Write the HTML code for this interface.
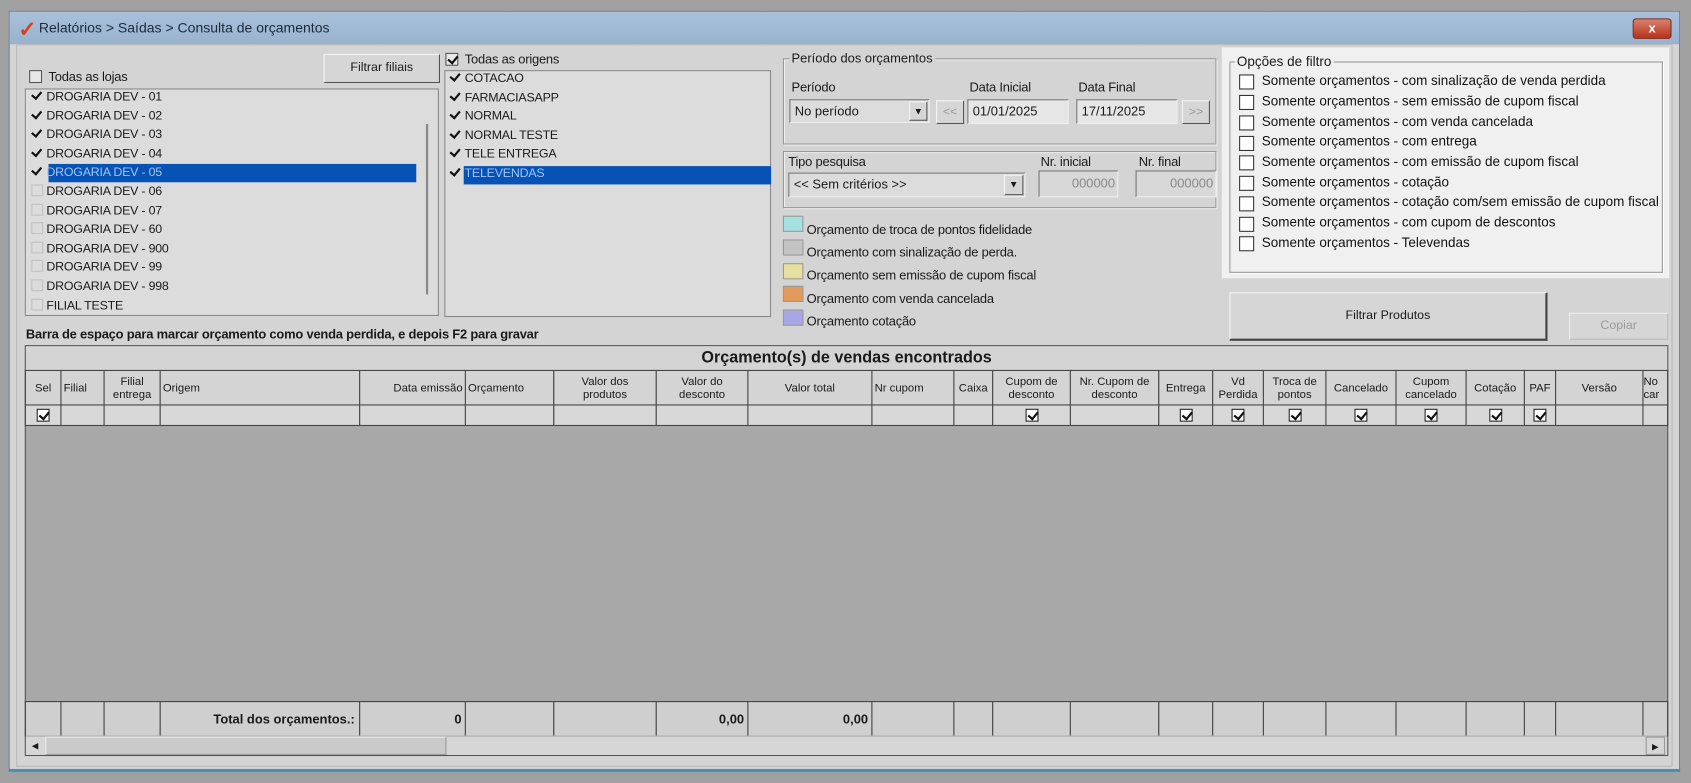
<!DOCTYPE html>
<html><head><meta charset="utf-8">
<style>
*{box-sizing:border-box;margin:0;padding:0}
html,body{width:1691px;height:783px;overflow:hidden;background:#a0a0a0;font-family:"Liberation Sans",sans-serif;color:#1a1a1a}
#w{position:absolute;left:0;top:0;width:1568px;height:726px;transform:scale(1.0784,1.0785);transform-origin:0 0}
.a{position:absolute}
.t{font-size:11.5px;letter-spacing:-0.2px;white-space:nowrap}
.cb{position:absolute;width:12px;height:12px;border:1px solid #555;background:#e8e8e8}
.cb.k::after{content:"";position:absolute;left:3px;top:0px;width:4px;height:7px;border:solid #111;border-width:0 2px 2px 0;transform:rotate(40deg)}
.sk{position:absolute;width:11px;height:11px}
.sk::after{content:"";position:absolute;left:2px;top:0px;width:4px;height:7px;border:solid #111;border-width:0 2px 2px 0;transform:rotate(40deg)}
.btn{position:absolute;background:#d6d6d6;border:1px solid #f4f4f4;border-right-color:#555;border-bottom-color:#555;font-size:11.5px;text-align:center}
.inp{position:absolute;background:#dcdcdc;border:1px solid #777;border-right-color:#eee;border-bottom-color:#eee;font-size:12px}
.grp{position:absolute;border:1px solid #999;box-shadow:1px 1px 0 #eee inset,1px 1px 0 #eee}
.gl{position:absolute;background:#d4d4d4;padding:0 2px;font-size:12px;top:-8px;left:5px}
table{border-collapse:collapse;table-layout:fixed;position:absolute}
td{border:1px solid #444;font-size:10.5px;text-align:center;line-height:12px;overflow:hidden;white-space:nowrap;padding:0}
.fc{position:absolute;width:14px;height:14px;border:1px solid #333;background:#fff}
.ft{position:absolute;font-size:12.5px;left:1170px;color:#111;white-space:nowrap}
</style></head><body>
<div id="w">
<div class="a" style="left:8px;top:10px;width:1550px;height:706px;background:#d4d4d4;border:1px solid #6d7f94;border-bottom:3px solid #4b8fae"></div>
<div class="a" style="left:9px;top:11px;width:1548px;height:30px;background:linear-gradient(#a9c0da,#98b2ce)"></div>
<div class="a" style="left:17px;top:15px;color:#e23c10;font-size:20px;font-weight:bold">✓</div>
<div class="a" style="left:36px;top:18px;font-size:13px;color:#1c2a3c">Relatórios &gt; Saídas &gt; Consulta de orçamentos</div>
<div class="a" style="left:1514px;top:17px;width:36px;height:19px;background:linear-gradient(#d9826d,#b8311d);border:1px solid #7a2a1c;border-radius:3px;color:#fff;font-size:12px;font-weight:bold;text-align:center;line-height:17px">x</div>
<div class="a" style="left:15px;top:41px;width:1536px;height:670px;background:#d4d4d4;border:1px solid #b8b8b8"></div>

<div class="cb" style="left:27px;top:65px"></div>
<div class="a t" style="left:45px;top:64px;font-size:12px">Todas as lojas</div>
<div class="btn" style="left:300px;top:50px;width:108px;height:27px;line-height:25px">Filtrar filiais</div>
<div class="a" style="left:23px;top:82px;width:384px;height:211px;background:#dcdcdc;border:1px solid #8a8a8a"></div>
<div class="a" style="left:395px;top:115px;width:2px;height:158px;background:#888"></div>
<div class="a" style="left:45px;top:152px;width:341px;height:17px;background:#0752b5"></div>
<div class="a t" style="left:29px;top:82px;line-height:17.6px">
<div><span class="sk" style="position:relative;display:inline-block;top:1px"></span> DROGARIA DEV - 01</div>
<div><span class="sk" style="position:relative;display:inline-block;top:1px"></span> DROGARIA DEV - 02</div>
<div><span class="sk" style="position:relative;display:inline-block;top:1px"></span> DROGARIA DEV - 03</div>
<div><span class="sk" style="position:relative;display:inline-block;top:1px"></span> DROGARIA DEV - 04</div>
<div><span class="sk" style="position:relative;display:inline-block;top:1px"></span> <span style="color:#9fc3ff">DROGARIA DEV - 05</span></div>
<div><span style="display:inline-block;width:11px;height:11px;border:1px solid #c0c0c0;vertical-align:-1px"></span> DROGARIA DEV - 06</div>
<div><span style="display:inline-block;width:11px;height:11px;border:1px solid #c0c0c0;vertical-align:-1px"></span> DROGARIA DEV - 07</div>
<div><span style="display:inline-block;width:11px;height:11px;border:1px solid #c0c0c0;vertical-align:-1px"></span> DROGARIA DEV - 60</div>
<div><span style="display:inline-block;width:11px;height:11px;border:1px solid #c0c0c0;vertical-align:-1px"></span> DROGARIA DEV - 900</div>
<div><span style="display:inline-block;width:11px;height:11px;border:1px solid #c0c0c0;vertical-align:-1px"></span> DROGARIA DEV - 99</div>
<div><span style="display:inline-block;width:11px;height:11px;border:1px solid #c0c0c0;vertical-align:-1px"></span> DROGARIA DEV - 998</div>
<div><span style="display:inline-block;width:11px;height:11px;border:1px solid #c0c0c0;vertical-align:-1px"></span> FILIAL TESTE</div>
</div>

<div class="cb k" style="left:413px;top:49px"></div>
<div class="a t" style="left:431px;top:48px;font-size:12px">Todas as origens</div>
<div class="a" style="left:412px;top:65px;width:303px;height:229px;background:#dcdcdc;border:1px solid #8a8a8a"></div>
<div class="a" style="left:430px;top:154px;width:285px;height:17px;background:#0752b5"></div>
<div class="a t" style="left:417px;top:65px;line-height:17.6px">
<div><span class="sk" style="position:relative;display:inline-block;top:1px"></span> COTACAO</div>
<div><span class="sk" style="position:relative;display:inline-block;top:1px"></span> FARMACIASAPP</div>
<div><span class="sk" style="position:relative;display:inline-block;top:1px"></span> NORMAL</div>
<div><span class="sk" style="position:relative;display:inline-block;top:1px"></span> NORMAL TESTE</div>
<div><span class="sk" style="position:relative;display:inline-block;top:1px"></span> TELE ENTREGA</div>
<div><span class="sk" style="position:relative;display:inline-block;top:1px"></span> <span style="color:#9fc3ff">TELEVENDAS</span></div>
</div>

<div class="grp" style="left:726px;top:54px;width:402px;height:80px"><div class="gl">Período dos orçamentos</div></div>
<div class="a t" style="left:734px;top:74px;font-size:12px">Período</div>
<div class="inp" style="left:732px;top:92px;width:130px;height:22px;padding:3px 4px">No período</div>
<div class="btn" style="left:843px;top:94px;width:17px;height:18px;font-size:9px;line-height:16px">▼</div>
<div class="btn" style="left:868px;top:93px;width:26px;height:22px;color:#999;line-height:20px">&lt;&lt;</div>
<div class="a t" style="left:899px;top:74px;font-size:12px">Data Inicial</div>
<div class="inp" style="left:897px;top:92px;width:94px;height:23px;padding:3px 4px;background:#e6e6e6">01/01/2025</div>
<div class="a t" style="left:1000px;top:74px;font-size:12px">Data Final</div>
<div class="inp" style="left:998px;top:92px;width:94px;height:23px;padding:3px 4px;background:#e6e6e6">17/11/2025</div>
<div class="btn" style="left:1096px;top:93px;width:26px;height:22px;color:#999;line-height:20px">&gt;&gt;</div>

<div class="grp" style="left:726px;top:140px;width:402px;height:53px"></div>
<div class="a t" style="left:731px;top:143px;font-size:12px">Tipo pesquisa</div>
<div class="inp" style="left:731px;top:160px;width:220px;height:23px;padding:3px 4px">&lt;&lt; Sem critérios &gt;&gt;</div>
<div class="btn" style="left:931px;top:162px;width:18px;height:19px;font-size:9px;line-height:17px">▼</div>
<div class="a t" style="left:965px;top:143px;font-size:12px">Nr. inicial</div>
<div class="inp" style="left:963px;top:158px;width:74px;height:25px;padding:4px 2px;text-align:right;color:#888;background:#d8d8d8">000000</div>
<div class="a t" style="left:1056px;top:143px;font-size:12px">Nr. final</div>
<div class="inp" style="left:1053px;top:158px;width:75px;height:25px;padding:4px 2px;text-align:right;color:#888;background:#d8d8d8">000000</div>

<div class="a" style="left:726px;top:200px;width:19px;height:15px;background:#a6e0e0;border:1px solid #999"></div>
<div class="a" style="left:726px;top:222px;width:19px;height:15px;background:#c4c4c4;border:1px solid #999"></div>
<div class="a" style="left:726px;top:244px;width:19px;height:15px;background:#e6e1a0;border:1px solid #999"></div>
<div class="a" style="left:726px;top:265px;width:19px;height:15px;background:#e29b5a;border:1px solid #999"></div>
<div class="a" style="left:726px;top:287px;width:19px;height:15px;background:#a8a6e6;border:1px solid #999"></div>
<div class="a t" style="left:748px;top:203px;line-height:21.2px;font-size:12px">
<div>Orçamento de troca de pontos fidelidade</div>
<div>Orçamento com sinalização de perda.</div>
<div>Orçamento sem emissão de cupom fiscal</div>
<div>Orçamento com venda cancelada</div>
<div>Orçamento cotação</div>
</div>

<div class="a" style="left:1133px;top:44px;width:415px;height:214px;background:#f0f0f0"></div>
<div class="a" style="left:1140px;top:57px;width:402px;height:196px;border:1px solid #999;box-shadow:1px 1px 0 #fff"></div>
<div class="a" style="left:1145px;top:50px;background:#f0f0f0;padding:0 2px;font-size:12.5px">Opções de filtro</div>
<div class="fc" style="left:1149px;top:69px"></div><div class="ft" style="top:68px">Somente orçamentos - com sinalização de venda perdida</div>
<div class="fc" style="left:1149px;top:88px"></div><div class="ft" style="top:87px">Somente orçamentos - sem emissão de cupom fiscal</div>
<div class="fc" style="left:1149px;top:107px"></div><div class="ft" style="top:106px">Somente orçamentos - com venda cancelada</div>
<div class="fc" style="left:1149px;top:126px"></div><div class="ft" style="top:124px">Somente orçamentos - com entrega</div>
<div class="fc" style="left:1149px;top:144px"></div><div class="ft" style="top:143px">Somente orçamentos - com emissão de cupom fiscal</div>
<div class="fc" style="left:1149px;top:163px"></div><div class="ft" style="top:162px">Somente orçamentos - cotação</div>
<div class="fc" style="left:1149px;top:182px"></div><div class="ft" style="top:180px">Somente orçamentos - cotação com/sem emissão de cupom fiscal</div>
<div class="fc" style="left:1149px;top:201px"></div><div class="ft" style="top:199px">Somente orçamentos - com cupom de descontos</div>
<div class="fc" style="left:1149px;top:219px"></div><div class="ft" style="top:218px">Somente orçamentos - Televendas</div>

<div class="btn" style="left:1140px;top:271px;width:295px;height:45px;line-height:43px;border-right:2px solid #444;border-bottom:2px solid #444">Filtrar Produtos</div>
<div class="btn" style="left:1455px;top:290px;width:92px;height:25px;line-height:23px;color:#9a9a9a;border-color:#eee #bbb #bbb #eee">Copiar</div>

<div class="a" style="left:24px;top:303px;font-size:12px;font-weight:bold;letter-spacing:-0.2px">Barra de espaço para marcar orçamento como venda perdida, e depois F2 para gravar</div>

<div class="a" style="left:23px;top:320px;width:1524px;height:381px;border:1px solid #555;background:#a8a8a8"></div>
<div class="a" style="left:24px;top:321px;width:1522px;height:22px;background:#d4d4d4;font-size:15px;font-weight:bold;text-align:center;line-height:21px">Orçamento(s) de vendas encontrados</div>
<table style="left:23px;top:343px;width:1523px">
<colgroup><col style="width:33px"><col style="width:40px"><col style="width:52px"><col style="width:185px"><col style="width:98px"><col style="width:82px"><col style="width:95px"><col style="width:85px"><col style="width:115px"><col style="width:76px"><col style="width:36px"><col style="width:72px"><col style="width:82px"><col style="width:50px"><col style="width:47px"><col style="width:58px"><col style="width:65px"><col style="width:65px"><col style="width:54px"><col style="width:29px"><col style="width:81px"><col style="width:23px"></colgroup>
<tr style="height:32px;background:#d4d4d4">
<td>Sel</td><td style="text-align:left;padding-left:2px">Filial</td><td>Filial<br>entrega</td><td style="text-align:left;padding-left:2px">Origem</td><td style="text-align:right;padding-right:2px">Data emissão</td><td style="text-align:left;padding-left:2px">Orçamento</td><td>Valor dos<br>produtos</td><td>Valor do<br>desconto</td><td>Valor total</td><td style="text-align:left;padding-left:2px">Nr cupom</td><td>Caixa</td><td>Cupom de<br>desconto</td><td>Nr. Cupom de<br>desconto</td><td>Entrega</td><td>Vd<br>Perdida</td><td>Troca de<br>pontos</td><td>Cancelado</td><td>Cupom<br>cancelado</td><td>Cotação</td><td>PAF</td><td>Versão</td><td style="text-align:left">No<br>car</td>
</tr>
<tr style="height:19px;background:#d8d8d8">
<td><span class="cb k" style="position:relative;display:inline-block;vertical-align:middle;background:#fff;border-color:#222"></span></td><td></td><td></td><td></td><td></td><td></td><td></td><td></td><td></td><td></td><td></td>
<td><span class="cb k" style="position:relative;display:inline-block;vertical-align:middle;background:#fff;border-color:#222"></span></td><td></td>
<td><span class="cb k" style="position:relative;display:inline-block;vertical-align:middle;background:#fff;border-color:#222"></span></td>
<td><span class="cb k" style="position:relative;display:inline-block;vertical-align:middle;background:#fff;border-color:#222"></span></td>
<td><span class="cb k" style="position:relative;display:inline-block;vertical-align:middle;background:#fff;border-color:#222"></span></td>
<td><span class="cb k" style="position:relative;display:inline-block;vertical-align:middle;background:#fff;border-color:#222"></span></td>
<td><span class="cb k" style="position:relative;display:inline-block;vertical-align:middle;background:#fff;border-color:#222"></span></td>
<td><span class="cb k" style="position:relative;display:inline-block;vertical-align:middle;background:#fff;border-color:#222"></span></td>
<td><span class="cb k" style="position:relative;display:inline-block;vertical-align:middle;background:#fff;border-color:#222"></span></td>
<td></td><td></td>
</tr>
</table>
<table style="left:23px;top:650px;width:1523px">
<colgroup><col style="width:33px"><col style="width:40px"><col style="width:52px"><col style="width:185px"><col style="width:98px"><col style="width:82px"><col style="width:95px"><col style="width:85px"><col style="width:115px"><col style="width:76px"><col style="width:36px"><col style="width:72px"><col style="width:82px"><col style="width:50px"><col style="width:47px"><col style="width:58px"><col style="width:65px"><col style="width:65px"><col style="width:54px"><col style="width:29px"><col style="width:81px"><col style="width:23px"></colgroup>
<tr style="height:32px;background:#cfcfcf">
<td></td><td></td><td></td><td style="font-size:12px;font-weight:bold;text-align:right;padding-right:4px">Total dos orçamentos.:</td><td style="font-size:12px;font-weight:bold;text-align:right;padding-right:3px">0</td><td></td><td></td><td style="font-size:12px;font-weight:bold;text-align:right;padding-right:3px">0,00</td><td style="font-size:12px;font-weight:bold;text-align:right;padding-right:3px">0,00</td><td></td><td></td><td></td><td></td><td></td><td></td><td></td><td></td><td></td><td></td><td></td><td></td><td></td>
</tr>
</table>
<div class="a" style="left:24px;top:682px;width:1522px;height:18px;background:#d6d6d6;border-top:1px solid #aaa"></div>
<div class="a" style="left:24px;top:683px;width:17px;height:17px;font-size:8px;line-height:17px;text-align:center">◀</div>
<div class="a" style="left:42px;top:683px;width:372px;height:17px;background:#cacaca;border:1px solid #999;border-top-color:#eee;border-left-color:#eee"></div>
<div class="a" style="left:1526px;top:683px;width:18px;height:17px;font-size:8px;line-height:17px;text-align:center;border:1px solid #999">▶</div>
</div>
</body></html>
